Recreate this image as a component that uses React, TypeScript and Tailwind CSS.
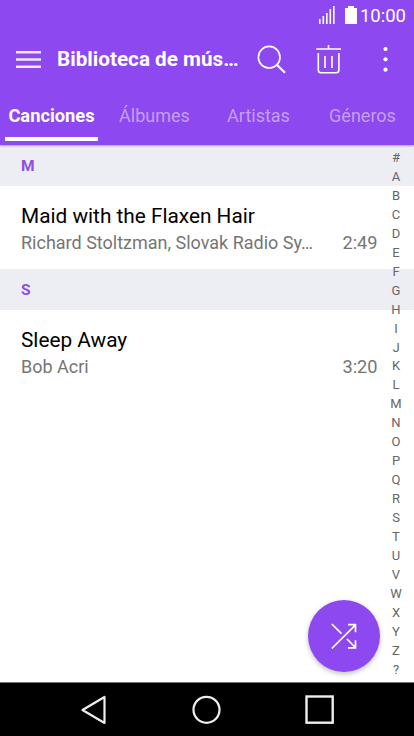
import clsx from "clsx";

const tabs = [
    { label: "Canciones", width: "w-[103px]" },
    { label: "Álbumes", width: "w-[103px]" },
    { label: "Artistas", width: "w-[105px]" },
    { label: "Géneros", width: "w-[103px]" },
];

const sections = [
    {
        letter: "M",
        songs: [
            {
                title: "Maid with the Flaxen Hair",
                artist: "Richard Stoltzman, Slovak Radio Sy…",
                length: "2:49",
            },
        ],
    },
    {
        letter: "S",
        songs: [{ title: "Sleep Away", artist: "Bob Acri", length: "3:20" }],
    },
];

const letters = "#ABCDEFGHIJKLMNOPQRSTUVWXYZ?".split("");

const StatusBar = () => (
    <div className="flex h-8 items-center justify-end pr-2 text-white">
        <svg width="16" height="18" viewBox="0 0 16 18" fill="currentColor" className="mr-[10px] mt-[-2px]">
            <rect x="0" y="13" width="1.6" height="5" />
            <rect x="3.5" y="10" width="1.6" height="8" />
            <rect x="7" y="7" width="1.6" height="11" />
            <rect x="10.5" y="3" width="1.6" height="15" />
            <rect x="14" y="0" width="1.6" height="18" />
        </svg>
        <svg width="12" height="18" viewBox="0 0 12 18" fill="currentColor" className="mr-[3px] mt-[-2px]">
            <path d="M3 0h6v2h3v16H0V2h3z" />
        </svg>
        <span className="text-[18.5px] leading-8">10:00</span>
    </div>
);

const Toolbar = () => (
    <div className="flex h-14 items-center text-white">
        <button aria-label="Menú" className="ml-4">
            <svg width="25" height="18" viewBox="0 0 25 18" fill="currentColor" opacity="0.88">
                <path d="M0 0h25v2.6H0zM0 7.2h25v2.6H0zM0 14.4h25V17H0z" />
            </svg>
        </button>
        <h1 className="ml-4 w-[200px] whitespace-nowrap text-[20.7px] font-bold">
            Biblioteca de mús…
        </h1>
        <button aria-label="Buscar">
            <svg width="30" height="30" viewBox="0 0 30 30" fill="none" stroke="currentColor">
                <circle cx="12.2" cy="12.2" r="10.8" strokeWidth="1.6" />
                <path d="M19.8 19.8l8.2 8" strokeWidth="2.2" />
            </svg>
        </button>
        <button aria-label="Eliminar" className="ml-[29px]">
            <svg width="26" height="30" viewBox="0 0 26 30" fill="none" stroke="currentColor" strokeWidth="1.6">
                <path d="M.2 4H25M12.5 0v4M2.3 8v17q0 2.8 2.8 2.8h15q2.8 0 2.8-2.8V8M9 11v12M16 11v12" />
            </svg>
        </button>
        <button aria-label="Más opciones" className="ml-10">
            <svg width="6" height="28" viewBox="0 0 6 28" fill="currentColor">
                <circle cx="3.5" cy="3" r="2.1" />
                <circle cx="3.5" cy="13.3" r="2.1" />
                <circle cx="3.5" cy="23.7" r="2.1" />
            </svg>
        </button>
    </div>
);

const Tabs = () => (
    <nav className="flex h-[57px] text-[18px]">
        {tabs.map((tab, i) => (
            <div
                key={tab.label}
                className={clsx(
                    "flex flex-col items-center justify-between pb-1",
                    tab.width,
                    i === 0 ? "text-[18.3px] font-bold text-white" : "text-[#c59ff7]"
                )}
            >
                <span className="pt-[14px] leading-7">{tab.label}</span>
                {i === 0 && <span className="h-1 w-[93px] bg-white" />}
            </div>
        ))}
    </nav>
);

const SongList = () => (
    <div className="w-full">
        {sections.map((section) => (
            <section key={section.letter}>
                <h2 className="flex h-[41px] items-center bg-[#edeef3] pl-[21px] pt-0.5 text-[15.5px] font-bold text-[#8d50e0]">
                    {section.letter}
                </h2>
                {section.songs.map((song) => (
                    <div key={song.title} className="h-[83px] pl-[21px] pr-[36.5px] pt-4">
                        <p className="text-[20.8px] leading-7 text-black">{song.title}</p>
                        <div className="flex justify-between text-[18px] leading-[26px] text-[#757575]">
                            <span className="whitespace-nowrap">{song.artist}</span>
                            <span className="text-[18.2px]">{song.length}</span>
                        </div>
                    </div>
                ))}
            </section>
        ))}
    </div>
);

const LetterIndex = () => (
    <div className="absolute right-[10px] top-[3px] flex w-4 flex-col items-center text-[13px] text-[#666]">
        {letters.map((letter) => (
            <span key={letter} className="h-[18.96px] leading-[19px]">
                {letter}
            </span>
        ))}
    </div>
);

const NavBar = () => (
    <div className="flex h-[54px] items-center border-t border-[#777] bg-black pl-20">
        <svg width="28" height="30" viewBox="0 0 28 30" fill="none" stroke="#eee" strokeWidth="2.2">
            <path d="M2.5 15L24.5 2v26z" strokeLinejoin="round" />
        </svg>
        <svg width="30" height="30" viewBox="0 0 30 30" fill="none" stroke="#eee" strokeWidth="2.2" className="ml-[83px]">
            <circle cx="15.5" cy="14.8" r="13" />
        </svg>
        <svg width="30" height="30" viewBox="0 0 30 30" fill="none" stroke="#eee" strokeWidth="2.4" className="ml-[84px]">
            <rect x="1.5" y="1.5" width="26.2" height="26.2" />
        </svg>
    </div>
);

const App = () => {
    return (
        <div className="flex h-[736px] w-[414px] flex-col overflow-hidden bg-white font-[Roboto,sans-serif]">
            <header className="relative z-10 bg-[#8d48f0] shadow-[0_1px_2px_rgba(0,0,0,0.3)]">
                <StatusBar />
                <Toolbar />
                <Tabs />
            </header>
            <main className="relative flex-1">
                <SongList />
                <LetterIndex />
                <button
                    aria-label="Aleatorio"
                    className="absolute bottom-[10px] right-[34px] flex size-[72px] items-center justify-center rounded-full bg-[#8d48f0] shadow-[0_2px_5px_rgba(0,0,0,0.25)]"
                >
                    <svg width="28" height="28" viewBox="0 0 28 28" fill="none" stroke="white" strokeWidth="1.7">
                        <path d="M1.8 26.5L25.5 2.8M18 2.7h7.5v7.5M1.8 2l9.7 9.7M17 17l8.3 8.5M18 25.8h7.5v-7.5" />
                    </svg>
                </button>
            </main>
            <NavBar />
        </div>
    );
};

export default App;
